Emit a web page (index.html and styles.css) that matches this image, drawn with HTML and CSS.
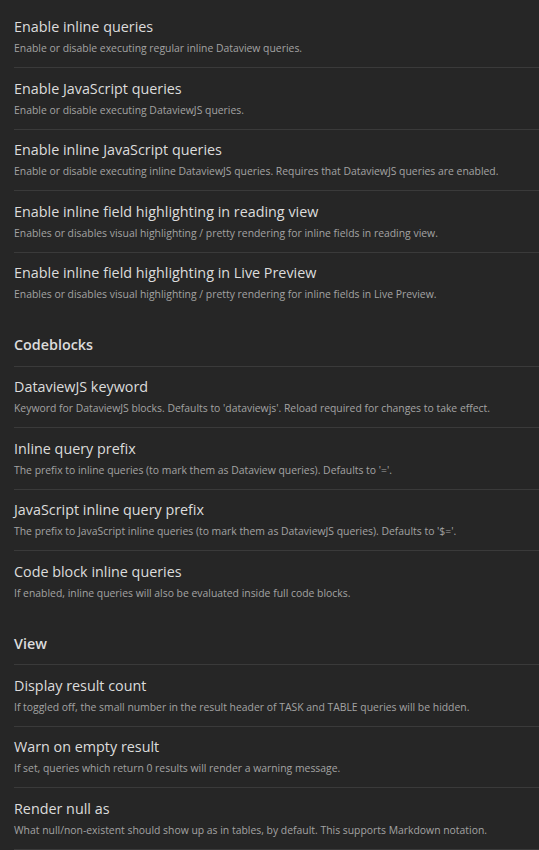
FILE: index.html
```html
<!DOCTYPE html>
<html>
<head>
<meta charset="utf-8">
<link rel="stylesheet" href="styles.css">
</head>
<body>
<div class="settings">
  <div class="item first">
    <div class="name">Enable inline queries</div>
    <div class="desc">Enable or disable executing regular inline Dataview queries.</div>
  </div>
  <div class="item">
    <div class="name">Enable JavaScript queries</div>
    <div class="desc">Enable or disable executing DataviewJS queries.</div>
  </div>
  <div class="item">
    <div class="name">Enable inline JavaScript queries</div>
    <div class="desc">Enable or disable executing inline DataviewJS queries. Requires that DataviewJS queries are enabled.</div>
  </div>
  <div class="item">
    <div class="name">Enable inline field highlighting in reading view</div>
    <div class="desc">Enables or disables visual highlighting / pretty rendering for inline fields in reading view.</div>
  </div>
  <div class="item">
    <div class="name">Enable inline field highlighting in Live Preview</div>
    <div class="desc">Enables or disables visual highlighting / pretty rendering for inline fields in Live Preview.</div>
  </div>
  <div class="heading">Codeblocks</div>
  <div class="item">
    <div class="name">DataviewJS keyword</div>
    <div class="desc">Keyword for DataviewJS blocks. Defaults to 'dataviewjs'. Reload required for changes to take effect.</div>
  </div>
  <div class="item">
    <div class="name">Inline query prefix</div>
    <div class="desc">The prefix to inline queries (to mark them as Dataview queries). Defaults to '='.</div>
  </div>
  <div class="item">
    <div class="name">JavaScript inline query prefix</div>
    <div class="desc">The prefix to JavaScript inline queries (to mark them as DataviewJS queries). Defaults to '$='.</div>
  </div>
  <div class="item">
    <div class="name">Code block inline queries</div>
    <div class="desc">If enabled, inline queries will also be evaluated inside full code blocks.</div>
  </div>
  <div class="heading">View</div>
  <div class="item">
    <div class="name">Display result count</div>
    <div class="desc">If toggled off, the small number in the result header of TASK and TABLE queries will be hidden.</div>
  </div>
  <div class="item">
    <div class="name">Warn on empty result</div>
    <div class="desc">If set, queries which return 0 results will render a warning message.</div>
  </div>
  <div class="item last">
    <div class="name">Render null as</div>
    <div class="desc">What null/non-existent should show up as in tables, by default. This supports Markdown notation.</div>
  </div>
</div>
</body>
</html>
```
FILE: styles.css
```css
html, body {
  margin: 0;
  padding: 0;
  background: #262626;
}
body {
  font-family: "Open Sans", "Noto Sans", sans-serif;
  overflow: hidden;
}
.settings {
  padding: 6.5px 0 0 14px;
  display: flex;
  flex-direction: column;
}
.item {
  border-top: 1px solid #3a3a3a;
  padding: 10.5px 0;
}
.item.first {
  border-top: none;
}
.item.last {
  border-bottom: 1px solid #3a3a3a;
}
.name {
  font-size: 14.35px;
  line-height: 20px;
  color: #dcdcdc;
}
.desc {
  margin-top: 3px;
  font-size: 10.4px;
  line-height: 16.5px;
  color: #a3a3a3;
}
.heading {
  padding: 22px 0 10.5px;
  font-size: 14.35px;
  line-height: 20px;
  font-weight: 600;
  color: #dcdcdc;
}
```
